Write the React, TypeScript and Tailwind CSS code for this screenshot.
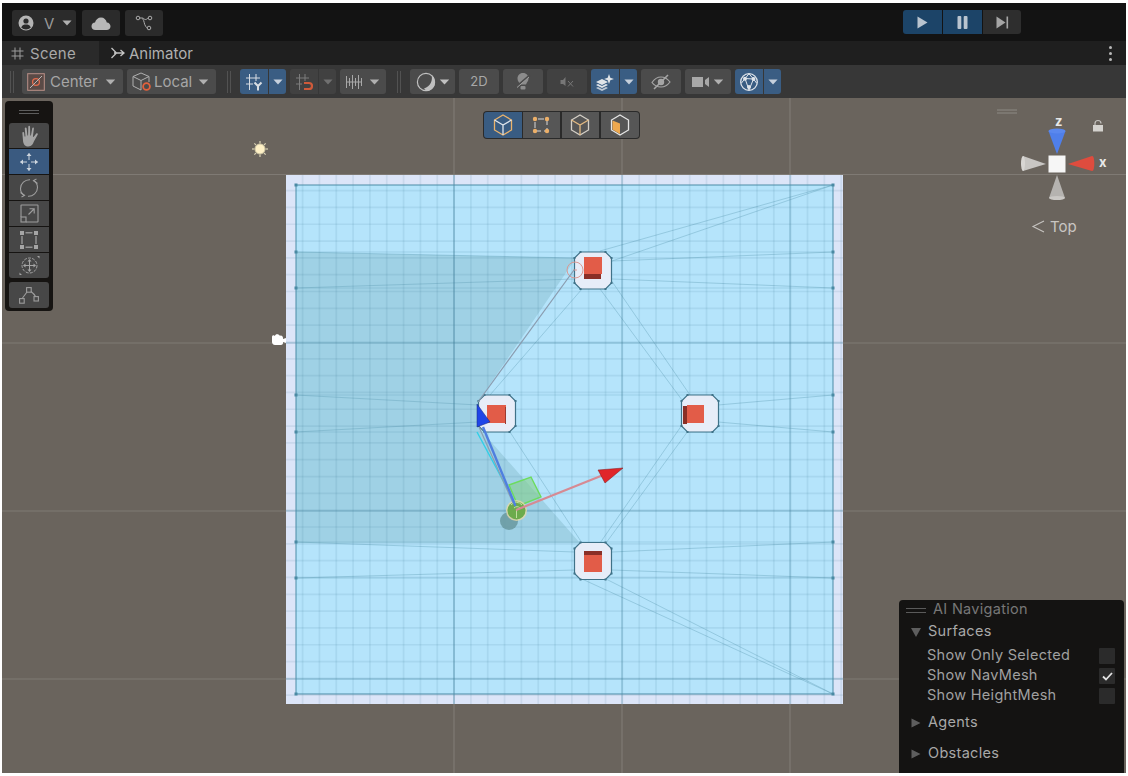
import React from "react";

const FONT = "font-['Inter','Liberation_Sans',sans-serif]";

function Caret({ c = "#b4b4b4", w = 12, h = 7 }: { c?: string; w?: number; h?: number }) {
  return (
    <svg width={w} height={h} viewBox="0 0 12 7" className="shrink-0">
      <path d="M0.5 0.5H11.5L6 6.5Z" fill={c} />
    </svg>
  );
}

function Btn({ w, blue, dim, children, className = "" }: { w: string; blue?: boolean; dim?: boolean; children: React.ReactNode; className?: string }) {
  return (
    <div
      className={`${w} h-[25px] flex items-center justify-center rounded-[3px] ${blue ? "bg-[#3a5d83]" : dim ? "bg-[#414141]" : "bg-[#4b4b4b]"} ${className}`}
    >
      {children}
    </div>
  );
}

function Split({ blue, dim, icon, caret }: { blue?: boolean; dim?: boolean; icon: React.ReactNode; caret?: string }) {
  return (
    <div className="flex gap-px">
      <Btn w="w-[28px]" blue={blue} dim={dim} className="rounded-r-none">
        {icon}
      </Btn>
      <Btn w="w-[17px]" blue={blue} dim={dim} className="rounded-l-none">
        <Caret w={10} h={6} c={caret ?? "#b9c6d6"} />
      </Btn>
    </div>
  );
}

function Sep() {
  return (
    <div className="flex gap-[2px] h-[22px] items-stretch">
      <div className="w-px bg-[#525252]" />
      <div className="w-px bg-[#525252]" />
    </div>
  );
}

function TitleBar() {
  return (
    <div className="h-[38px] bg-[#131313] flex items-start pt-[7px] relative shrink-0">
      <div className="ml-[10px] w-[64px] h-[26px] rounded-[3px] bg-[#2b2b2b] flex items-center pl-[6px] gap-[8px]">
        <svg width="16" height="16" viewBox="0 0 16 16">
          <circle cx="8" cy="8" r="7.5" fill="#b4b4b4" />
          <circle cx="8" cy="6" r="2.6" fill="#2b2b2b" />
          <path d="M3.2 12.4C4.4 10 6 9.6 8 9.6S11.6 10 12.8 12.4C11.5 13.7 9.8 14.4 8 14.4S4.5 13.7 3.2 12.4Z" fill="#2b2b2b" />
        </svg>
        <span className={`${FONT} text-[15px] leading-none text-[#9a9a9a] ml-[2px]`}>V</span>
        <Caret w={10} h={6} c="#b0b0b0" />
      </div>
      <div className="ml-[6px] w-[38px] h-[26px] rounded-[3px] bg-[#2b2b2b] flex items-center justify-center">
        <svg width="20" height="13" viewBox="0 0 20 13">
          <path d="M4.5 13C2 13 0.5 11.2 0.5 9.2C0.5 7.2 2 5.7 4 5.6C4.7 2.6 7.2 0.5 10 0.5C13 0.5 15.2 2.6 15.8 5.4C18 5.5 19.5 7.2 19.5 9.2C19.5 11.3 18 13 15.5 13Z" fill="#b8b8b8" />
        </svg>
      </div>
      <div className="ml-[5px] w-[38px] h-[26px] rounded-[3px] bg-[#2b2b2b] flex items-center justify-center">
        <svg width="18" height="16" viewBox="0 0 18 16" fill="none" stroke="#ababab" strokeWidth="1">
          <circle cx="3" cy="3" r="1.8" />
          <circle cx="15" cy="3" r="1.8" />
          <circle cx="14" cy="13" r="1.8" />
          <path d="M4.8 3H7C9 3 8.5 4 10 4.5C11 4.8 12 4 13.2 3M7.5 3.5C9.5 6 9 9 10.5 11C11 12 12 13 12.2 13" />
        </svg>
      </div>
      <div className="absolute left-[901px] top-[7px] flex gap-px">
        <div className="w-[39px] h-[24px] bg-[#1c4468] rounded-l-[3px] flex items-center justify-center">
          <svg width="11" height="13" viewBox="0 0 11 13"><path d="M0.5 0.5L10.5 6.5L0.5 12.5Z" fill="#b9c4cf" /></svg>
        </div>
        <div className="w-[39px] h-[24px] bg-[#1c4468] flex items-center justify-center">
          <svg width="11" height="13" viewBox="0 0 11 13"><rect x="0.5" width="3.8" height="13" rx="1" fill="#b9c4cf" /><rect x="6.7" width="3.8" height="13" rx="1" fill="#b9c4cf" /></svg>
        </div>
        <div className="w-[38px] h-[24px] bg-[#2e2e2e] rounded-r-[3px] flex items-center justify-center">
          <svg width="13" height="13" viewBox="0 0 13 13"><path d="M0.5 0.5L9.5 6.5L0.5 12.5Z" fill="#a5a5a5" /><rect x="10.5" y="0.5" width="1.6" height="12" fill="#a5a5a5" /></svg>
        </div>
      </div>
    </div>
  );
}

function TabBar() {
  return (
    <div className="h-[24px] bg-[#1f1f1f] flex items-stretch relative shrink-0">
      <div className="w-[97px] bg-[#2a2a2a] flex items-center pl-[9px] gap-[6px]">
        <svg width="13" height="13" viewBox="0 0 13 13" stroke="#9c9c9c" strokeWidth="1" fill="none">
          <path d="M4 0.5V12.5M9 0.5V12.5M0.5 4H12.5M0.5 9H12.5" />
        </svg>
        <span className={`${FONT} text-[15px] leading-none text-[#a8a8a8] tracking-[0.3px]`}>Scene</span>
      </div>
      <div className="flex items-center pl-[12px] gap-[4px]">
        <svg width="14" height="12" viewBox="0 0 14 12" stroke="#c4c4c4" strokeWidth="1.3" fill="none">
          <path d="M0.5 1L5.5 6L0.5 11M3 6H13M9.5 3L13 6L9.5 9" />
        </svg>
        <span className={`${FONT} text-[15px] leading-none text-[#b0b0b0]`}>Animator</span>
      </div>
      <div className="absolute right-[14px] top-[5px] flex flex-col gap-[3px]">
        <div className="w-[3px] h-[3px] rounded-full bg-[#b8b8b8]" />
        <div className="w-[3px] h-[3px] rounded-full bg-[#b8b8b8]" />
        <div className="w-[3px] h-[3px] rounded-full bg-[#b8b8b8]" />
      </div>
    </div>
  );
}

function Toolbar() {
  return (
    <div className="h-[33px] bg-[#373737] flex items-center shrink-0">
      <div className="ml-[8px] mr-[8px]"><Sep /></div>
      <Btn w="w-[101px]" className="justify-start pl-[5px] gap-[5px]">
        <svg width="18" height="18" viewBox="0 0 18 18" fill="none" className="shrink-0">
          <rect x="0.7" y="0.7" width="16.6" height="16.6" stroke="#b99088" strokeWidth="1" fill="#5a4a46" />
          <circle cx="9" cy="9" r="3.4" stroke="#e26b4c" strokeWidth="1.3" />
          <path d="M3 15L15 3" stroke="#b8b8b8" strokeWidth="1" />
        </svg>
        <span className={`${FONT} text-[15px] leading-none text-[#a6a6a6] mr-[2px]`}>Center</span>
        <Caret w={11} h={6} c="#b0b0b0" />
      </Btn>
      <Btn w="w-[89px]" className="ml-[4px] justify-start pl-[5px] gap-[2px]">
        <svg width="20" height="20" viewBox="0 0 20 20" fill="none" className="shrink-0">
          <path d="M9 1L17 4.5V10M9 1L1 4.5V14L9 18M1 4.5L9 8.5L17 4.5M9 8.5V18" stroke="#b0b0b0" strokeWidth="1" />
          <circle cx="14.5" cy="14.5" r="3.4" stroke="#e2613c" strokeWidth="1.8" />
        </svg>
        <span className={`${FONT} text-[15px] leading-none text-[#a6a6a6] mr-[4px]`}>Local</span>
        <Caret w={11} h={6} c="#b0b0b0" />
      </Btn>
      <div className="ml-[11px] mr-[9px]"><Sep /></div>
      <Split
        blue
        caret="#c6d0dc"
        icon={
          <svg width="18" height="18" viewBox="0 0 18 18" fill="none" stroke="#d8dde3" strokeWidth="1">
            <path d="M1 5H15M1 11H8M4.5 1V17M11 1V8" />
            <path d="M9.5 9.5L13 13L16.5 9.5M13 13V17.5" strokeWidth="2" />
          </svg>
        }
      />
      <div className="ml-[4px]">
        <Split
          dim
          caret="#707070"
          icon={
            <svg width="18" height="18" viewBox="0 0 18 18" fill="none">
              <path d="M1 5H14M1 11H7M4.5 1V17M10 1V8" stroke="#7d7d7d" strokeWidth="1" />
              <path d="M9 10H14A2.6 2.6 0 0 1 14 16H9" stroke="#cf5a3a" strokeWidth="2.2" />
            </svg>
          }
        />
      </div>
      <Btn w="w-[46px]" className="ml-[4px] gap-[5px]">
        <svg width="18" height="16" viewBox="0 0 18 16" fill="none" stroke="#a8a8a8" strokeWidth="1">
          <path d="M0.5 2V14M3.5 4V12M6.5 1V15M9.5 4V12M12.5 1V15M15.5 4V12M0.5 8H16" />
        </svg>
        <Caret w={11} h={6} c="#b0b0b0" />
      </Btn>
      <div className="ml-[11px] mr-[9px]"><Sep /></div>
      <Btn w="w-[45px]" className="gap-[3px]">
        <svg width="20" height="20" viewBox="0 0 20 20" fill="none">
          <circle cx="10" cy="10" r="8.6" stroke="#c0c0c0" strokeWidth="1.2" />
          <path d="M11 18.8C15.5 18.8 19 15 19 10.2C19 7 17.5 4.5 15.5 3C17 8 14.5 14.5 8 16.5C9 17.5 10 18.8 11 18.8Z" fill="#c0c0c0" />
        </svg>
        <Caret w={11} h={6} c="#c0c0c0" />
      </Btn>
      <Btn w="w-[40px]" className="ml-[4px]">
        <span className={`${FONT} text-[13px] leading-none text-[#a8a8a8]`}>2D</span>
      </Btn>
      <Btn w="w-[40px]" className="ml-[4px]">
        <svg width="16" height="20" viewBox="0 0 16 20" fill="none">
          <path d="M8 1C4.5 1 2.5 3.5 2.5 6.5C2.5 9 4 10 5 12.5H11C12 10 13.5 9 13.5 6.5C13.5 3.5 11.5 1 8 1Z" fill="#8c8c8c" />
          <rect x="5.5" y="14" width="5" height="3.5" rx="1" fill="#8c8c8c" />
          <path d="M1 15L15 3" stroke="#4b4b4b" strokeWidth="2" />
          <path d="M2 15.5L14 5" stroke="#a0a0a0" strokeWidth="1" />
        </svg>
      </Btn>
      <Btn w="w-[40px]" dim className="ml-[4px]">
        <svg width="14" height="12" viewBox="0 0 14 12" fill="none">
          <path d="M0.5 4H3L5.5 1V10L3 8H0.5Z" fill="#777" />
          <path d="M8 5L13 10.5M13 5L8 10.5" stroke="#777" strokeWidth="1" />
        </svg>
      </Btn>
      <div className="ml-[4px]">
        <Split
          blue
          caret="#c6d0dc"
          icon={
            <svg width="20" height="18" viewBox="0 0 20 18" fill="#e0e4e8">
              <path d="M1 9L7 6L13 9L7 12Z" />
              <path d="M1 12L3 11L7 13L11 11L13 12L7 15Z" />
              <path d="M1 15L3 14L7 16L11 14L13 15L7 18Z" opacity="0.8" />
              <path d="M14 1L15.3 4.7L19 6L15.3 7.3L14 11L12.7 7.3L9 6L12.7 4.7Z" />
            </svg>
          }
        />
      </div>
      <Btn w="w-[40px]" className="ml-[4px]">
        <svg width="20" height="16" viewBox="0 0 20 16" fill="none" stroke="#a6a6a6" strokeWidth="1.2">
          <path d="M1 8.5C4 4 7 3 10 3S16 4 19 8C16 12 13 13 10 13S4 12.5 1 8.5Z" />
          <circle cx="10" cy="8" r="2.6" fill="#a6a6a6" />
          <path d="M3 15L17 1" strokeWidth="1.6" />
        </svg>
      </Btn>
      <Btn w="w-[46px]" className="ml-[4px] gap-[3px]">
        <svg width="18" height="12" viewBox="0 0 18 12" fill="#a8a8a8">
          <rect x="0" y="1" width="11" height="10" />
          <path d="M13 4L17 1V11L13 8Z" />
        </svg>
        <Caret w={11} h={6} c="#b0b0b0" />
      </Btn>
      <div className="ml-[4px]">
        <Split
          blue
          caret="#c6d0dc"
          icon={
            <svg width="20" height="20" viewBox="0 0 20 20" fill="none" stroke="#dfe4ea" strokeWidth="1.3">
              <circle cx="10" cy="10" r="8.3" />
              <path d="M2.5 11L6 6.5L14.5 7L17.5 11M6 6.5L10 1.8L14.5 7M6 6.5L10 18M14.5 7L10 18" strokeWidth="1" />
              <circle cx="6" cy="6.8" r="1.3" fill="#dfe4ea" />
              <circle cx="14.5" cy="7" r="1.3" fill="#dfe4ea" />
              <circle cx="10" cy="15" r="1.3" fill="#dfe4ea" />
            </svg>
          }
        />
      </div>
    </div>
  );
}

const MINOR_V = Array.from({ length: 33 }, (_, i) => 286 + i * 16.83 + 16.6);
const MINOR_H = Array.from({ length: 31 }, (_, i) => 174 + i * 16.82 + 16.6);
const MAJOR_V = [454, 622, 790];
const MAJOR_H = [174.5, 343, 511, 679];

const EDGES: number[][] = [
  [833, 185, 600, 251], [833, 185, 612, 261],
  [833, 694, 606, 579], [833, 694, 582, 579],
  [833, 252, 612, 261], [833, 288, 612, 279], [833, 395, 718, 405], [833, 432, 718, 422],
  [833, 542, 612, 552], [833, 578, 612, 570],
  [296, 252, 575, 258], [296, 288, 575, 279], [296, 395, 478, 405], [296, 432, 478, 422],
  [296, 542, 575, 552], [296, 578, 575, 570],
  [611, 280, 690, 395], [600, 289, 682, 400],
  [688, 431, 606, 543], [682, 425, 600, 543],
  [510, 432, 582, 543], [490, 395, 582, 289],
];

const FLATS = [252, 288, 395, 432, 542, 578];

function octagon(cx: number, cy: number) {
  const r = 18.5;
  const c = 6;
  return [
    [cx - r + c, cy - r], [cx + r - c, cy - r], [cx + r, cy - r + c], [cx + r, cy + r - c],
    [cx + r - c, cy + r], [cx - r + c, cy + r], [cx - r, cy + r - c], [cx - r, cy - r + c],
  ];
}

function Octagon({ cx, cy }: { cx: number; cy: number }) {
  const pts = octagon(cx, cy);
  return (
    <g>
      <polygon points={pts.map((p) => p.join(",")).join(" ")} fill="#e7edf8" stroke="#3f7288" strokeWidth="1.2" />
      {pts.map((p, i) => (
        <rect key={i} x={p[0] - 1} y={p[1] - 1} width="2" height="2" fill="#3f7288" />
      ))}
    </g>
  );
}

function SceneDrawing() {
  return (
    <svg className="absolute inset-0 w-full h-full" viewBox="2 98 1124 675" preserveAspectRatio="none">
      {MAJOR_V.map((x) => (
        <line key={x} x1={x} y1="98" x2={x} y2="773" stroke="#7f7a74" strokeWidth="1.2" />
      ))}
      {MAJOR_H.map((y) => (
        <line key={y} x1="2" y1={y} x2="1126" y2={y} stroke="#7f7a74" strokeWidth="1.2" />
      ))}
      <rect x="286" y="175" width="557" height="529" fill="#dce5f8" />
      <rect x="296" y="185" width="537" height="509" fill="#b5e4fb" />
      <polygon points="296,252 576,258 478,402 478,427 580,543 296,543" fill="#9fd1e5" />
      {EDGES.map((e, i) => (
        <line key={i} x1={e[0]} y1={e[1]} x2={e[2]} y2={e[3]} stroke="#5f9db5" strokeWidth="1" opacity="0.38" />
      ))}
      {FLATS.map((y) => (
        <line key={y} x1="296" y1={y} x2="833" y2={y} stroke="#5f9db5" strokeWidth="1" opacity="0.28" />
      ))}
      {MINOR_V.map((x) => (
        <line key={x} x1={x} y1="175" x2={x} y2="704" stroke="#33708c" strokeWidth="1.7" opacity="0.1" />
      ))}
      {MINOR_H.map((y) => (
        <line key={y} x1="286" y1={y} x2="843" y2={y} stroke="#33708c" strokeWidth="1.7" opacity="0.1" />
      ))}
      {MAJOR_V.map((x, i) => (
        <line key={x} x1={x} y1="175" x2={x} y2="704" stroke="#3f7f99" strokeWidth="1" opacity={i === 0 ? 0.65 : 0.45} />
      ))}
      {MAJOR_H.slice(1).map((y) => (
        <line key={y} x1="286" y1={y} x2="843" y2={y} stroke="#3f7f99" strokeWidth="1" opacity="0.5" />
      ))}
      <rect x="296" y="185" width="537" height="509" fill="none" stroke="#4b8ba5" strokeWidth="1" />
      {[[296, 185], [833, 185], [296, 694], [833, 694], [296, 252], [296, 288], [296, 395], [296, 432], [296, 542], [296, 578], [833, 252], [833, 288], [833, 395], [833, 432], [833, 542], [833, 578]].map((p, i) => (
        <rect key={i} x={p[0] - 1.5} y={p[1] - 1.5} width="3" height="3" fill="#4a8aa3" />
      ))}
      <Octagon cx={593} cy={270.5} />
      <Octagon cx={497} cy={413.5} />
      <Octagon cx={700} cy={413.5} />
      <Octagon cx={593} cy={561} />
      <rect x="584" y="257" width="18" height="17" fill="#e25c48" />
      <rect x="584" y="274" width="17" height="5" fill="#8a2f27" />
      <rect x="487" y="405" width="19" height="18" fill="#e25c48" />
      <rect x="505" y="407" width="1" height="17" fill="#9c3a30" />
      <rect x="683" y="406" width="4" height="18" fill="#8a2f27" />
      <rect x="687" y="405" width="17" height="18" fill="#e25c48" />
      <rect x="584" y="551" width="18" height="4" fill="#8a2f27" />
      <rect x="584" y="555" width="18" height="17" fill="#e25c48" />
      <circle cx="575" cy="270" r="8" fill="none" stroke="#d99a94" strokeWidth="1" />
      <line x1="573" y1="270" x2="577" y2="270" stroke="#d99a94" strokeWidth="1" />
      <line x1="478" y1="402" x2="574" y2="270" stroke="#8a9bae" strokeWidth="1.2" />
      <circle cx="509" cy="521" r="9" fill="#6b9ba3" opacity="0.9" />
      <polygon points="509,485 531,477 541,497 518,506" fill="#86cf8c" fillOpacity="0.6" stroke="#6cdc5e" strokeWidth="1.4" />
      <circle cx="516.5" cy="510.5" r="10.5" fill="#e6d9a8" opacity="0.8" />
      <circle cx="516.5" cy="510.5" r="9" fill="#6cab4c" />
      <path d="M511 505A7 7 0 0 1 522 505M514 508A4 4 0 0 1 520 508M516.5 510V518" fill="none" stroke="#bfe0a0" strokeWidth="1" />
      <line x1="477" y1="432" x2="507" y2="488" stroke="#2fd0e8" strokeWidth="1.4" />
      <line x1="479" y1="427" x2="513" y2="503" stroke="#8b9eb0" strokeWidth="1.2" />
      <line x1="515.5" y1="506" x2="483" y2="427" stroke="#4f7fdf" strokeWidth="2.4" />
      <line x1="516" y1="510" x2="602" y2="475.5" stroke="#d68a93" strokeWidth="2.2" />
      <polygon points="623,468 598,470 605,483" fill="#e0262a" stroke="#7e1418" strokeWidth="0.5" />
      <polygon points="477,404 490,422 477,427" fill="#1f45e8" stroke="#16287a" strokeWidth="0.5" />
      <g stroke="#d9d2b4" strokeWidth="1.2">
        {[0, 45, 90, 135, 180, 225, 270, 315].map((a) => (
          <line key={a} x1="260" y1="141" x2="260" y2="143.5" transform={`rotate(${a} 260 149)`} />
        ))}
      </g>
      <circle cx="260" cy="149" r="5" fill="#fff1c6" stroke="#cfc7a4" strokeWidth="1" />
      <path d="M272 337C272 335 274 335 275 336C275 333.5 279 333.5 280 336C281 335 283 336 283 338V343C283 344 282 345 281 345H275C273 345 272 343.5 272 342Z" fill="#ffffff" />
      <path d="M283 339L286 338V343L283 342Z" fill="#ffffff" />
      <g stroke="#8d8a85" strokeWidth="1">
        <line x1="997" y1="110" x2="1017" y2="110" />
        <line x1="997" y1="113" x2="1017" y2="113" />
      </g>
      <polygon points="1057,154 1048.5,131 1065.5,131" fill="#4f7fea" />
      <ellipse cx="1057" cy="131" rx="8.5" ry="2.5" fill="#5a88ee" />
      <polygon points="1068,164 1092,156 1092,171" fill="#de4c3e" />
      <ellipse cx="1092.5" cy="163.5" rx="1.8" ry="7.5" fill="#de4c3e" />
      <polygon points="1046,164 1023,156 1023,171" fill="#c8c6c3" />
      <ellipse cx="1023" cy="163.5" rx="2" ry="7.5" fill="#d8d6d3" />
      <polygon points="1057,175 1049,198 1065,198" fill="#b5b3b0" />
      <ellipse cx="1057" cy="198" rx="8" ry="2" fill="#cac8c5" />
      <rect x="1048.5" y="155.5" width="17" height="17" fill="#f6f6f6" />
      <path d="M1095 125V123.5A3 3 0 0 1 1101 123.5" fill="none" stroke="#c4c2be" strokeWidth="1.2" />
      <rect x="1093" y="125" width="10" height="6.5" fill="#d4d2ce" />
      <path d="M1044 221L1033 226.5L1044 232" fill="none" stroke="#c6c4c0" strokeWidth="1.1" />
    </svg>
  );
}

function ToolButton({ top, bottom, active, children }: { top?: boolean; bottom?: boolean; active?: boolean; children: React.ReactNode }) {
  return (
    <div
      className={`w-[40px] h-[25px] flex items-center justify-center ${active ? "bg-[#3a5a80]" : "bg-[#474747]"} ${top ? "rounded-t-[3px]" : ""} ${bottom ? "rounded-b-[3px]" : ""}`}
    >
      {children}
    </div>
  );
}

function ToolPanel() {
  return (
    <div className="absolute left-[3px] top-[3px] w-[48px] h-[210px] bg-[#161412] rounded-[4px] flex flex-col items-center">
      <div className="h-[22px] flex flex-col justify-center gap-[2px] shrink-0">
        <div className="w-[20px] h-px bg-[#5d5d5d]" />
        <div className="w-[20px] h-px bg-[#5d5d5d]" />
      </div>
      <div className="flex flex-col gap-px">
        <ToolButton top>
          <svg width="21" height="22" viewBox="0 0 19 20" fill="#a4a4a4">
            <path d="M3 7C3 6 4.6 6 4.6 7L5 10.5H5.8L5.2 3C5.2 2 6.8 2 6.9 3L7.6 9.5H8.2L8.4 1.5C8.4 0.5 10 0.5 10 1.5L10.2 9.5H10.8L12 3C12.2 2 13.6 2.2 13.5 3.2L12.6 10.5L13.2 11L15.6 7.8C16.3 7 17.5 7.8 16.9 8.8L13.5 15C12.5 17.5 11.5 19.5 8.5 19.5C5 19.5 3.8 17 3.6 14Z" />
          </svg>
        </ToolButton>
        <ToolButton active>
          <svg width="20" height="20" viewBox="0 0 20 20" fill="none" stroke="#cdd5de" strokeWidth="1">
            <path d="M10 1.5V8M10 12V18.5M1.5 10H8M12 10H18.5" />
            <path d="M7.5 4L10 1L12.5 4Z M7.5 16L10 19L12.5 16Z M4 7.5L1 10L4 12.5Z M16 7.5L19 10L16 12.5Z" fill="#cdd5de" stroke="none" />
          </svg>
        </ToolButton>
        <ToolButton>
          <svg width="20" height="20" viewBox="0 0 20 20" fill="none" stroke="#9e9e9e" strokeWidth="1.1">
            <path d="M11 1.8C6 1.5 1.5 5.5 1.5 10.5C1.5 13.5 3 16 5.5 17.5" />
            <path d="M1.5 14.5L5.5 17.5L2.5 19" />
            <path d="M9 18.2C14 18.5 18.5 14.5 18.5 9.5C18.5 6.5 17 4 14.5 2.5" />
            <path d="M18.5 5.5L14.5 2.5L17.5 1" />
          </svg>
        </ToolButton>
        <ToolButton>
          <svg width="19" height="19" viewBox="0 0 19 19" fill="none" stroke="#9e9e9e" strokeWidth="1.1">
            <path d="M1 13V1.5A0.5 0.5 0 0 1 1.5 1H17.5A0.5 0.5 0 0 1 18 1.5V17.5A0.5 0.5 0 0 1 17.5 18H6" />
            <rect x="1" y="13" width="5" height="5" />
            <path d="M8.5 10.5L14 5M9.5 4.8H14.2V9.5" />
          </svg>
        </ToolButton>
        <ToolButton>
          <svg width="18" height="18" viewBox="0 0 18 18" fill="#a5a5a5">
            <rect x="0" y="0" width="4" height="4" /><rect x="14" y="0" width="4" height="4" /><rect x="0" y="14" width="4" height="4" /><rect x="14" y="14" width="4" height="4" />
            <rect x="5.5" y="1.2" width="7" height="1.2" /><rect x="5.5" y="15.6" width="7" height="1.2" /><rect x="1.4" y="5" width="1.2" height="8" /><rect x="15.4" y="5" width="1.2" height="8" />
          </svg>
        </ToolButton>
        <ToolButton bottom>
          <svg width="21" height="21" viewBox="0 0 21 21" fill="none" stroke="#a5a5a5" strokeWidth="1">
            <circle cx="10.5" cy="10.5" r="7.5" strokeDasharray="3 1.2" />
            <path d="M10.5 5V16M5 10.5H16" />
            <path d="M8.5 6.5L10.5 4L12.5 6.5Z M8.5 14.5L10.5 17L12.5 14.5Z M6.5 8.5L4 10.5L6.5 12.5Z M14.5 8.5L17 10.5L14.5 12.5Z" fill="#a5a5a5" stroke="none" />
            <path d="M18 1H20.5V3.5L18 1Z M3 20H0.5V17.5L3 20Z" fill="#a5a5a5" stroke="none" />
          </svg>
        </ToolButton>
      </div>
      <div className="mt-[4px] w-[40px] h-[26px] rounded-[3px] bg-[#474747] flex items-center justify-center">
        <svg width="20" height="17" viewBox="0 0 20 17" fill="none" stroke="#9c9c9c" strokeWidth="1.1">
          <rect x="0.6" y="11.6" width="4.6" height="4.6" />
          <rect x="7.6" y="0.6" width="4.6" height="4.6" />
          <rect x="15" y="9.6" width="4.4" height="4.4" />
          <path d="M3.5 11L8 5M12 4.5C14 6 15.5 7.5 16.5 9.5" />
        </svg>
      </div>
    </div>
  );
}

function ViewTools() {
  return (
    <div className="absolute left-[481px] top-[13px] h-[28px] w-[157px] rounded-[4px] bg-[#2a2a2a] p-px flex gap-px">
      <div className="w-[38px] h-full rounded-l-[3px] bg-[#395c82] flex items-center justify-center">
        <svg width="20" height="22" viewBox="0 0 20 22" fill="none" stroke="#eab36c" strokeWidth="1.3">
          <path d="M10 1L18.5 6V16L10 21L1.5 16V6Z" />
          <path d="M1.5 6L10 11L18.5 6M10 11V21" stroke="#dfe5ec" />
        </svg>
      </div>
      <div className="w-[37px] h-full bg-[#565656] flex items-center justify-center">
        <svg width="18" height="18" viewBox="0 0 18 18">
          <path d="M3 3H15V15H3Z" fill="none" stroke="#d8d8d8" strokeWidth="1" strokeDasharray="6 3" strokeDashoffset="-3" />
          <circle cx="3" cy="3" r="2.2" fill="#edb069" /><circle cx="15" cy="3" r="2.2" fill="#edb069" /><circle cx="3" cy="15" r="2.2" fill="#edb069" /><circle cx="15" cy="15" r="2.2" fill="#edb069" />
        </svg>
      </div>
      <div className="w-[38px] h-full ml-px bg-[#565656] flex items-center justify-center">
        <svg width="20" height="22" viewBox="0 0 20 22" fill="none" stroke="#d5d0c8" strokeWidth="1.3">
          <path d="M10 1L18.5 6V16L10 21L1.5 16V6Z" />
          <path d="M1.5 6L10 11L18.5 6M10 11V21" stroke="#e4ba82" />
        </svg>
      </div>
      <div className="w-[38px] h-full ml-px rounded-r-[3px] bg-[#565656] flex items-center justify-center">
        <svg width="20" height="22" viewBox="0 0 20 22">
          <path d="M10 1L18.5 6V16L10 21L1.5 16V6Z" fill="none" stroke="#e6e6e6" strokeWidth="1.3" />
          <path d="M2.5 6.5L10 9.5V20L2.5 15.5Z" fill="#efa94f" />
        </svg>
      </div>
    </div>
  );
}

function NavRow({ label, checked }: { label: string; checked?: boolean }) {
  return (
    <div className="h-[20px] flex items-center justify-between pl-[28px] pr-[9px]">
      <span className={`${FONT} text-[14.5px] leading-none text-[#a0a0a0] tracking-[0.3px] -translate-y-px`}>{label}</span>
      <div className="w-[16px] h-[16px] rounded-[1px] bg-[#2b2b2b] flex items-center justify-center">
        {checked && (
          <svg width="11" height="9" viewBox="0 0 11 9" fill="none">
            <path d="M1 4.5L4 7.5L10 1" stroke="#e2e2e2" strokeWidth="1.8" />
          </svg>
        )}
      </div>
    </div>
  );
}

function Section({ label, open, h }: { label: string; open?: boolean; h: string }) {
  return (
    <div className={`${h} flex items-center pl-[12px] gap-[7px]`}>
      {open ? (
        <svg width="10" height="9" viewBox="0 0 10 9"><path d="M0 0H10L5 9Z" fill="#5e5e5e" /></svg>
      ) : (
        <svg width="10" height="10" viewBox="0 0 10 10"><path d="M0.5 0.5L9.5 5L0.5 9.5Z" fill="#5e5e5e" /></svg>
      )}
      <span className={`${FONT} text-[14.5px] leading-none text-[#a8a8a8] tracking-[0.3px] -translate-y-px`}>{label}</span>
    </div>
  );
}

function NavPanel() {
  return (
    <div className="absolute right-[2px] bottom-0 w-[225px] h-[173px] bg-[#141312] rounded-t-[4px] flex flex-col">
      <div className="h-[20px] flex items-center pl-[7px] gap-[7px]">
        <div className="flex flex-col gap-[3px]">
          <div className="w-[20px] h-px bg-[#5a5a5a]" />
          <div className="w-[20px] h-px bg-[#5a5a5a]" />
        </div>
        <span className={`${FONT} text-[14.5px] leading-none text-[#777777] tracking-[0.3px] -translate-y-px`}>AI Navigation</span>
      </div>
      <Section label="Surfaces" open h="h-[22px] mt-px" />
      <div className="mt-[3px]">
        <NavRow label="Show Only Selected" />
        <NavRow label="Show NavMesh" checked />
        <NavRow label="Show HeightMesh" />
      </div>
      <Section label="Agents" h="h-[24px] mt-[5px]" />
      <Section label="Obstacles" h="h-[24px] mt-[7px]" />
    </div>
  );
}

export default function App() {
  return (
    <div className="w-[1128px] h-[776px] bg-white pt-[3px] px-[2px] pb-[3px] overflow-hidden flex flex-col">
      <TitleBar />
      <TabBar />
      <Toolbar />
      <div className="relative flex-1 bg-[#6a645d] overflow-hidden">
        <SceneDrawing />
        <ToolPanel />
        <ViewTools />
        <span className={`${FONT} absolute left-[1053px] top-[17px] text-[13px] leading-none font-bold text-[#e8e8e8]`}>z</span>
        <span className={`${FONT} absolute left-[1097px] top-[58px] text-[13px] leading-none font-bold text-[#e8e8e8]`}>x</span>
        <span className={`${FONT} absolute left-[1048px] top-[121px] text-[15px] leading-none text-[#c8c6c2]`}>Top</span>
        <NavPanel />
      </div>
    </div>
  );
}
